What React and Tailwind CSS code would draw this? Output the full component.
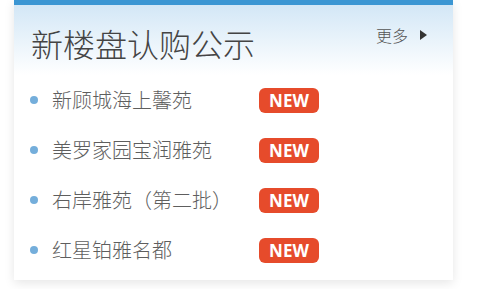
// App.jsx — 新楼盘认购公示 card

const items = [
  "新顾城海上馨苑",
  "美罗家园宝润雅苑",
  "右岸雅苑（第二批）",
  "红星铂雅名都",
];

export default function App() {
  return (
    <div
      className="w-[480px] h-[289px] bg-white overflow-hidden"
      style={{ fontFamily: '"Noto Sans CJK SC", "Noto Sans", sans-serif' }}
    >
      <div className="ml-[14px] w-[439px] h-[280px] bg-white shadow-[0_3px_10px_rgba(0,0,0,0.10)]">
        <div className="h-[5px] bg-[#3b96d3]" />
        <div className="h-[70px] bg-gradient-to-b from-[#d3e7f6] to-white flex items-start justify-between pl-[17px] pr-[26px]">
          <h2 className="mt-[17px] text-[32px] leading-[42px] font-light text-[#444]">
            新楼盘认购公示
          </h2>
          <a className="mt-[20px] flex items-center gap-[12px] text-[16px] leading-[20px] font-light text-[#555]">
            更多
            <span className="w-0 h-0 border-y-[5px] border-y-transparent border-l-[7px] border-l-[#333]" />
          </a>
        </div>
        <ul className="pl-[16px]">
          {items.map((name, i) => (
            <li key={i} className="h-[50px] flex items-center">
              <span className="w-[8px] h-[8px] rounded-full bg-[#74aedb]" />
              <span className="ml-[14px] w-[207px] text-[20px] font-light text-[#5e5e5e] whitespace-nowrap">
                {name}
              </span>
              <span
                className="w-[60px] h-[25px] rounded-[6px] bg-[#e64b2b] text-white text-[17px] font-bold leading-[25px] text-center"
                style={{ fontFamily: '"Open Sans", "Liberation Sans", sans-serif' }}
              >
                NEW
              </span>
            </li>
          ))}
        </ul>
      </div>
    </div>
  );
}
